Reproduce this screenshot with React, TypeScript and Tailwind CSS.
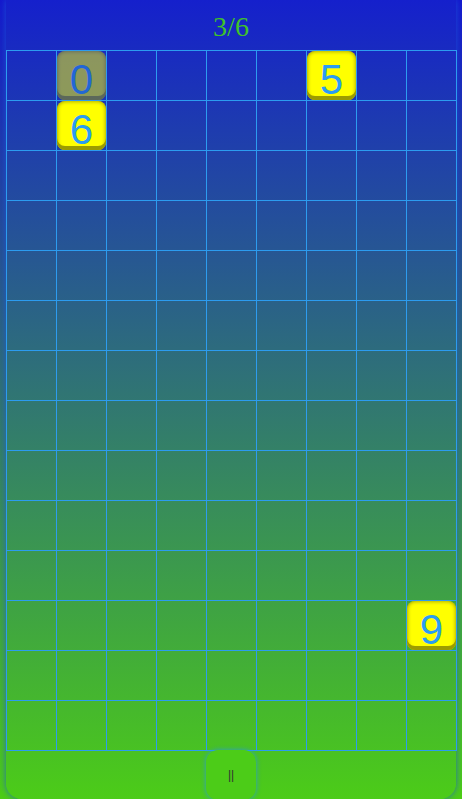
const COLS = 9;
const ROWS = 14;

type Tile = { row: number; col: number; value: number; faded?: boolean };

const TILES: Tile[] = [
  { row: 0, col: 1, value: 0, faded: true },
  { row: 0, col: 6, value: 5 },
  { row: 1, col: 1, value: 6 },
  { row: 11, col: 8, value: 9 },
];

function TileBlock({ value, faded }: { value: number; faded?: boolean }) {
  return (
    <div
      className={`flex h-full w-full items-center justify-center rounded-lg bg-[#ffff00] pt-2 text-[42px] leading-none text-[#2b9cf2] shadow-[inset_0_-4px_0_#9c9c00,inset_0_0_4px_#8a8a00] ${
        faded ? "opacity-50" : ""
      }`}
      style={{ fontFamily: '"Liberation Sans", Arial, sans-serif' }}
    >
      {value}
    </div>
  );
}

export default function App() {
  const cells = [];
  for (let r = 0; r < ROWS; r++) {
    for (let c = 0; c < COLS; c++) {
      const tile = TILES.find((t) => t.row === r && t.col === c);
      cells.push(
        <div
          key={`${r}-${c}`}
          className="h-[50px] w-[50px] border-r border-b border-[#2c9cf0]"
        >
          {tile && <TileBlock value={tile.value} faded={tile.faded} />}
        </div>
      );
    }
  }

  return (
    <div className="h-[799px] w-full overflow-hidden bg-linear-to-b/srgb from-[#1418cd] to-[#4ccd14]">
      <div className="mx-[6px] flex h-full flex-col rounded-b-2xl bg-linear-to-b/srgb from-[#1520cc] to-[#4ccc18] shadow-[0_0_6px_rgba(30,90,220,0.8)]">
        {/* header */}
        <div
          className="flex h-[50px] shrink-0 items-center justify-center pt-1 text-[28px] text-[#3fc22a]"
          style={{ fontFamily: '"Liberation Serif", "Times New Roman", serif' }}
        >
          3/6
        </div>

        {/* board */}
        <div className="grid w-[451px] grid-cols-[repeat(9,50px)] border-t border-l border-[#2c9cf0]">
          {cells}
        </div>

        {/* bottom bar */}
        <div className="flex flex-1 justify-center">
          <button
            className="-mt-px flex h-[50px] w-[50px] items-center justify-center rounded-xl bg-[#4ccc18] text-[12px] text-[#333] shadow-[0_0_5px_rgba(40,150,230,0.9)]"
            style={{ fontFamily: '"Liberation Sans", Arial, sans-serif' }}
          >
            ||
          </button>
        </div>
      </div>
    </div>
  );
}
